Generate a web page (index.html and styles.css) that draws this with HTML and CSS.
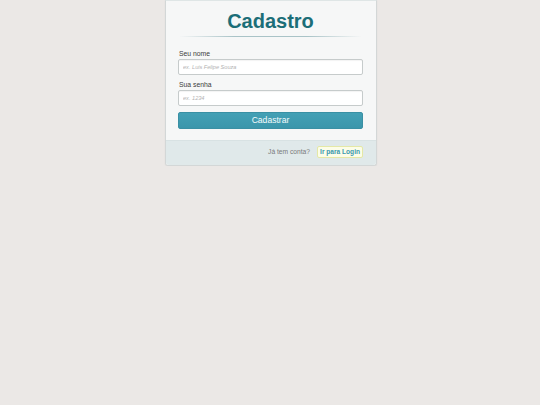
FILE: index.html
```html
<!DOCTYPE html>
<html lang="pt-BR">
<head>
<meta charset="utf-8">
<title>Cadastro</title>
<link rel="stylesheet" href="styles.css">
</head>
<body>
<div class="card">
  <div class="card-body">
    <h1 class="title">Cadastro</h1>
    <div class="divider"></div>
    <form class="form">
      <label class="label" for="nome">Seu nome</label>
      <input class="input" id="nome" type="text" placeholder="ex. Luis Felipe Souza">
      <label class="label label-2" for="senha">Sua senha</label>
      <input class="input" id="senha" type="password" placeholder="ex. 1234">
      <button class="submit" type="button">Cadastrar</button>
    </form>
  </div>
  <div class="card-footer">
    <span class="footer-text">Já tem conta?</span>
    <a class="login-link" href="#">Ir para Login</a>
  </div>
</div>
</body>
</html>
```
FILE: styles.css
```css
html, body {
  margin: 0;
  padding: 0;
}
body {
  background: #ebe8e6;
  font-family: "Liberation Sans", Arial, sans-serif;
}
.card {
  width: 210px;
  margin: 0 auto;
  background: #f6f7f7;
  border: 1px solid #d3d7d7;
  border-top-color: #dfe6e6;
  border-radius: 0 0 3px 3px;
  box-shadow: 0 0 2px rgba(0,0,0,0.06);
  box-sizing: content-box;
  transform: translateX(1px);
}
.card-body {
  padding: 0 13px 11px 12px;
}
.title {
  margin: 0;
  padding-top: 8px;
  font-size: 20px;
  line-height: 24px;
  font-weight: bold;
  text-align: center;
  color: #1c6e78;
}
.divider {
  height: 1px;
  margin: 3px 1px 0 1px;
  background: linear-gradient(to right, rgba(160,190,195,0), #a9c3c7 30%, #a9c3c7 70%, rgba(160,190,195,0));
}
.form {
  display: flex;
  flex-direction: column;
  margin-top: 12px;
}
.label {
  display: block;
  font-size: 6.8px;
  line-height: 9px;
  color: #3c3c3c;
  padding-left: 1px;
  margin-bottom: 1px;
}
.label-2 {
  margin-top: 5px;
}
.input {
  box-sizing: border-box;
  width: 100%;
  height: 16px;
  margin: 0;
  padding: 0 4px;
  border: 1px solid #c6cbcb;
  border-radius: 2px;
  background: #fff;
  box-shadow: inset 0 1px 1px rgba(0,0,0,0.05);
  font-family: "Liberation Sans", Arial, sans-serif;
  font-size: 5.6px;
}
.input::placeholder {
  color: #b3b3b3;
  font-style: italic;
}
.submit {
  box-sizing: border-box;
  width: 100%;
  height: 17px;
  margin-top: 6px;
  padding: 0;
  border: 1px solid #3a90a4;
  border-radius: 2px;
  background: linear-gradient(#43a0b5, #3b96ab);
  color: #f4fbfc;
  font-family: "Liberation Sans", Arial, sans-serif;
  font-size: 8.6px;
  line-height: 15px;
}
.card-footer {
  display: flex;
  justify-content: flex-end;
  align-items: center;
  gap: 7px;
  height: 25px;
  padding: 5px 13px 8px 12px;
  background: #e0e9ea;
  border-top: 1px solid #d8e2e3;
  box-sizing: border-box;
  border-radius: 0 0 3px 3px;
}
.footer-text {
  font-size: 6.7px;
  color: #7a7a7a;
}
.login-link {
  display: inline-block;
  height: 12px;
  line-height: 10px;
  box-sizing: border-box;
  padding: 0 2px;
  border: 1px solid #e4e8a6;
  border-radius: 2px;
  background: #fcfde8;
  color: #3a98ad;
  font-size: 6.6px;
  font-weight: bold;
  text-decoration: none;
}
```
